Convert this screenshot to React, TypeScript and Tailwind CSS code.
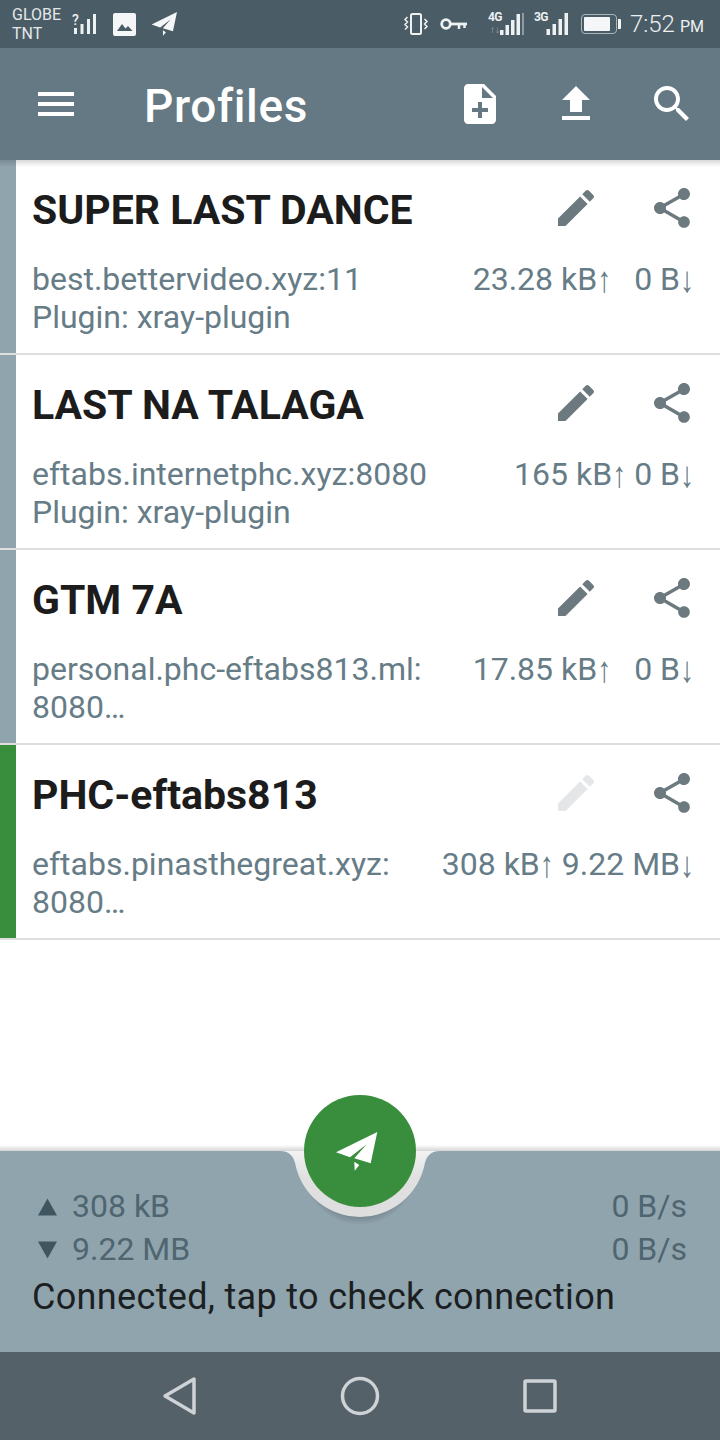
const font = { fontFamily: "Roboto, sans-serif" };

const PATHS = {
  menu: "M3 18h18v-2H3v2zm0-5h18v-2H3v2zm0-7v2h18V6H3z",
  add: "M14 2H6c-1.1 0-1.99.9-1.99 2L4 20c0 1.1.89 2 1.99 2H18c1.1 0 2-.9 2-2V8l-6-6zm2 14h-3v3h-2v-3H8v-2h3v-3h2v3h3v2zm-3-7V3.5L18.5 9H13z",
  upload: "M9 16h6v-6h4l-7-7-7 7h4zm-4 2h14v2H5z",
  search:
    "M15.5 14h-.79l-.28-.27C15.41 12.59 16 11.11 16 9.5 16 5.91 13.09 3 9.5 3S3 5.91 3 9.5 5.91 16 9.5 16c1.61 0 3.09-.59 4.23-1.57l.27.28v.79l5 4.99L20.49 19l-4.99-5zm-6 0C7.01 14 5 11.99 5 9.5S7.01 5 9.5 5 14 7.01 14 9.5 11.99 14 9.5 14z",
  edit: "M3 17.25V21h3.75L17.81 9.94l-3.75-3.75L3 17.25zM20.71 7.04c.39-.39.39-1.02 0-1.41l-2.34-2.34c-.39-.39-1.02-.39-1.41 0l-1.83 1.83 3.75 3.75 1.83-1.83z",
  share:
    "M18 16.08c-.76 0-1.44.3-1.96.77L8.91 12.7c.05-.23.09-.46.09-.7s-.04-.47-.09-.7l7.05-4.11c.54.5 1.25.81 2.04.81 1.66 0 3-1.34 3-3s-1.34-3-3-3-3 1.34-3 3c0 .24.04.47.09.7L8.04 9.81C7.5 9.31 6.79 9 6 9c-1.66 0-3 1.34-3 3s1.34 3 3 3c.79 0 1.5-.31 2.04-.81l7.12 4.16c-.05.21-.08.43-.08.65 0 1.61 1.31 2.92 2.92 2.92 1.61 0 2.92-1.31 2.92-2.92s-1.31-2.92-2.92-2.92z",
};

function Icon({ d, className }: { d: string; className?: string }) {
  return (
    <svg viewBox="0 0 24 24" className={"w-12 h-12 " + (className ?? "")} fill="currentColor">
      <path d={d} />
    </svg>
  );
}

function Plane({ className }: { className?: string }) {
  return (
    <svg viewBox="0 0 42 39" className={className} fill="currentColor">
      <path d="M0 20.3 41.3 0 34.7 31.300 18.300 26.300 30.700 12.300 14 25.300z" />
      <path d="M18.300 29.700 23.300 33 18.700 38.700z" />
    </svg>
  );
}

function Bars({ className }: { className?: string }) {
  return (
    <svg viewBox="0 0 22 22" className={className} fill="currentColor">
      <rect x="0" y="16" width="3.5" height="6" />
      <rect x="6" y="11" width="3.5" height="11" />
      <rect x="12" y="6" width="3.5" height="16" />
      <rect x="18" y="0" width="3.5" height="22" />
    </svg>
  );
}

function StatusBar() {
  return (
    <div className="h-12 bg-[#4a5c66] flex items-center text-[#eef1f2] shrink-0">
      <div className="ml-3 w-[58px] text-[16px] leading-[19px] text-[#e4e8ea]">
        GLOBE
        <br />
        TNT
      </div>
      <div className="relative w-[24px] h-[22px] ml-[2px] mt-[2px]">
        <span className="absolute left-0 -top-[3px] text-[14px] font-medium leading-[18px]">?</span>
        <svg viewBox="0 0 22 20" className="absolute left-[2px] top-0 w-[22px] h-[20px]" fill="currentColor">
          <rect x="0" y="14" width="3" height="6" />
          <rect x="6.5" y="10" width="3" height="10" />
          <rect x="13" y="5" width="3" height="15" />
          <rect x="19" y="0" width="3" height="20" />
        </svg>
      </div>
      <svg viewBox="0 0 23 23" className="w-[23px] h-[23px] ml-[17px]">
        <rect width="23" height="23" rx="2" fill="#f4f6f7" />
        <path d="M4 18 9 11l3.5 4.5L15 13l4.5 5z" fill="#4a5c66" />
      </svg>
      <Plane className="w-[27px] h-[24px] ml-[15px] text-[#f4f6f7]" />
      <div className="flex-1" />
      <svg viewBox="0 0 26 22" className="w-[26px] h-[22px]" fill="none" stroke="currentColor" strokeWidth="1.5">
        <rect x="8" y="1" width="10" height="20" rx="1.5" strokeWidth="2" />
        <path d="M4.5 4 2 6.5l2.500 2.500L2 11.500l2.500 2.500L2 16.500M21.500 6 24 8.500 21.500 11 24 13.500 21.500 16" />
      </svg>
      <svg viewBox="0 0 27 14" className="w-[27px] h-[14px] ml-[11px]" fill="none" stroke="currentColor">
        <circle cx="6" cy="7" r="4.300" strokeWidth="2.800" />
        <path d="M11 7h16" strokeWidth="2.800" />
        <path d="M19 8v4M24.500 8v3" strokeWidth="2.500" />
      </svg>
      <div className="relative w-[36px] h-[24px] ml-[21px]">
        <span className="absolute left-0 top-[-2px] text-[12px] font-bold leading-[14px] tracking-[-0.5px]">4G</span>
        <span className="absolute left-[2px] top-[12px] text-[10px] font-bold leading-[12px] text-[#a4b0b6]">↑↓</span>
        <svg viewBox="0 0 24 22" className="absolute left-[12px] top-[1px] w-[24px] h-[22px]" fill="currentColor">
          <rect x="0" y="17" width="3.500" height="5" />
          <rect x="5.500" y="12" width="3.500" height="10" />
          <rect x="11" y="7" width="3.500" height="15" />
          <rect x="16.500" y="1" width="3.500" height="21" />
          <rect x="22" y="0" width="2" height="22" fill="#8d9ca4" />
        </svg>
      </div>
      <div className="relative w-[36px] h-[24px] ml-[10px]">
        <span className="absolute left-0 top-[-2px] text-[12px] font-bold leading-[14px] tracking-[-0.5px]">3G</span>
        <Bars className="absolute left-[12px] top-[1px] w-[23px] h-[22px]" />
      </div>
      <div className="flex items-center ml-[11px]">
        <div className="w-[36px] h-[20px] rounded-[4px] border border-[#aab5ba] p-[2px]">
          <div className="w-[26px] h-full bg-[#f4f6f7] rounded-[1px]" />
        </div>
        <div className="w-[3px] h-[10px] bg-[#f4f6f7] ml-[1px] rounded-r-[1px]" />
      </div>
      <div className="ml-[9px] mr-4 text-[24px] font-light text-[#eef1f2] whitespace-nowrap leading-none">
        7:52<span className="text-[16px] font-normal ml-[5px]">PM</span>
      </div>
    </div>
  );
}

function Toolbar() {
  return (
    <div className="h-[112px] bg-[#647983] flex items-center text-white shrink-0">
      <div className="w-[112px] flex justify-center">
        <Icon d={PATHS.menu} />
      </div>
      <div className="pl-[32px] mt-[3px] text-[46px] font-medium leading-none tracking-[0.6px]">Profiles</div>
      <div className="flex-1" />
      <div className="flex">
        <div className="w-24 flex justify-center">
          <Icon d={PATHS.add} />
        </div>
        <div className="w-24 flex justify-center">
          <Icon d={PATHS.upload} />
        </div>
        <div className="w-24 flex justify-center">
          <Icon d={PATHS.search} />
        </div>
      </div>
    </div>
  );
}

type Profile = {
  name: string;
  host: string;
  sub: string;
  up: string;
  down: string;
  wideGap?: boolean;
  active?: boolean;
};

const profiles: Profile[] = [
  { name: "SUPER LAST DANCE", host: "best.bettervideo.xyz:11", sub: "Plugin: xray-plugin", up: "23.28 kB", down: "0 B", wideGap: true },
  { name: "LAST NA TALAGA", host: "eftabs.internetphc.xyz:8080", sub: "Plugin: xray-plugin", up: "165 kB", down: "0 B" },
  { name: "GTM 7A", host: "personal.phc-eftabs813.ml:", sub: "8080…", up: "17.85 kB", down: "0 B", wideGap: true },
  { name: "PHC-eftabs813", host: "eftabs.pinasthegreat.xyz:", sub: "8080…", up: "308 kB", down: "9.22 MB", active: true },
];

function Arrow({ c }: { c: string }) {
  return (
    <span className="inline-block font-['Liberation_Sans'] text-[28px] font-light scale-y-[1.3] relative -top-[1px]">{c}</span>
  );
}

function ProfileRow({ p }: { p: Profile }) {
  return (
    <div className="h-[195px] flex flex-col">
      <div className="flex flex-1">
        <div className={"w-4 " + (p.active ? "bg-[#388e3c]" : "bg-[#90a4ae]")} />
        <div className="flex-1 flex flex-col pl-[16px] pr-[26px]">
          <div className="flex items-center h-[96px] -mr-[26px]">
            <div className="flex-1 mt-[4px] text-[41px] font-bold text-[#1c1c1c] leading-none">{p.name}</div>
            <div className={"w-24 flex justify-center " + (p.active ? "text-[#e4e6e7]" : "text-[#6c7a80]")}>
              <Icon d={PATHS.edit} />
            </div>
            <div className="w-24 flex justify-center text-[#6c7a80]">
              <Icon d={PATHS.share} />
            </div>
          </div>
          <div className="flex justify-between text-[32px] leading-[38px] text-[#667c86] mt-[4px]">
            <div className="whitespace-nowrap">
              {p.host}
              <br />
              {p.sub}
            </div>
            <div className="flex whitespace-nowrap">
              <span>
                {p.up}
                <Arrow c="↑" />
              </span>
              <span className={p.wideGap ? "ml-[23px]" : "ml-2"}>
                {p.down}
                <Arrow c="↓" />
              </span>
            </div>
          </div>
        </div>
      </div>
      <div className="h-[2px] bg-[#dedede]" />
    </div>
  );
}

function Footer() {
  return (
    <div className="relative h-[201px] bg-[#90a4ae] shrink-0">
      {/* shadow along the top edge */}
      <div className="absolute left-0 right-0 -top-[6px] h-[6px] bg-gradient-to-t from-[#d4d4d4] to-white" />
      {/* notch under the button */}
      <svg viewBox="0 0 180 92" className="absolute left-[270px] -top-[6px] w-[180px] h-[92px]">
        <defs>
          <linearGradient id="notch" x1="0" y1="0" x2="0" y2="1">
            <stop offset="0" stopColor="#f2f2f2" />
            <stop offset="0.4" stopColor="#e0e0e0" />
            <stop offset="1" stopColor="#dedede" />
          </linearGradient>
          <radialGradient id="drop">
            <stop offset="0.86" stopColor="#5f6f77" stopOpacity="0.5" />
            <stop offset="1" stopColor="#5f6f77" stopOpacity="0" />
          </radialGradient>
        </defs>
        <circle cx="90" cy="22" r="58" fill="url(#drop)" />
        <path d="M10 6C20 6 23.800 12 25.300 19A66 66 0 0 0 154.700 19C156.200 12 160 6 170 6z" fill="url(#notch)" />
      </svg>
      <div className="absolute left-[304px] -top-[56px] w-[112px] h-[112px] rounded-full bg-[#388e3c] flex items-center justify-center">
        <Plane className="w-[42px] h-[39px] text-white -translate-x-[3px]" />
      </div>

      <div className="pt-[34px] px-[33px] text-[32px] leading-[43px] text-[#4f6570]">
        <div className="flex justify-between">
          <div className="flex items-center">
            <svg viewBox="0 0 20 18" className="w-[19px] h-[18px] ml-[5px] mr-[15px] text-[#3f5660]" fill="currentColor">
              <path d="M10 0 20 18H0z" />
            </svg>
            308 kB
          </div>
          <div>0 B/s</div>
        </div>
        <div className="flex justify-between">
          <div className="flex items-center">
            <svg viewBox="0 0 20 18" className="w-[19px] h-[18px] ml-[5px] mr-[15px] text-[#3f5660]" fill="currentColor">
              <path d="M0 0h20L10 18z" />
            </svg>
            9.22 MB
          </div>
          <div>0 B/s</div>
        </div>
        <div className="text-[36px] tracking-[0.33px] leading-[46px] text-[#1b1f22] mt-[3px] -ml-[1px] whitespace-nowrap">
          Connected, tap to check connection
        </div>
      </div>
    </div>
  );
}

function NavBar() {
  return (
    <div className="h-[88px] bg-[#546168] flex items-center justify-center gap-[142px] shrink-0 text-[#cdd3d6]">
      <svg viewBox="0 0 36 40" className="w-9 h-10" fill="none" stroke="currentColor" strokeWidth="3.500" strokeLinejoin="round">
        <path d="M32 3v34L3 20z" />
      </svg>
      <svg viewBox="0 0 40 40" className="w-10 h-10" fill="none" stroke="currentColor" strokeWidth="3.500">
        <circle cx="20" cy="20" r="17.500" />
      </svg>
      <svg viewBox="0 0 36 36" className="w-9 h-9" fill="none" stroke="currentColor" strokeWidth="3.500">
        <rect x="3" y="3" width="30" height="30" rx="1" />
      </svg>
    </div>
  );
}

export default function App() {
  return (
    <div className="w-[720px] h-[1440px] bg-white flex flex-col overflow-hidden" style={font}>
      <StatusBar />
      <Toolbar />
      <div className="relative flex-1">
        <div className="absolute left-0 right-0 top-0 h-[7px] bg-gradient-to-b from-black/15 to-transparent" />
        {profiles.map((p) => (
          <ProfileRow key={p.name} p={p} />
        ))}
      </div>
      <Footer />
      <NavBar />
    </div>
  );
}
